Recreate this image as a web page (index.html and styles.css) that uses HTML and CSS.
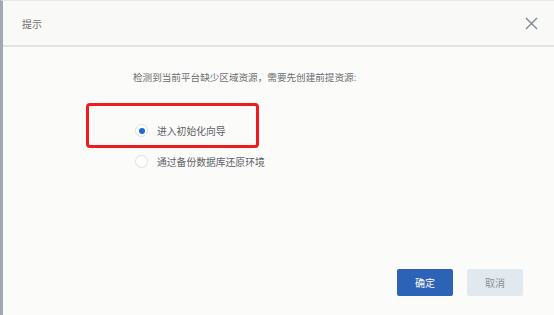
FILE: index.html
```html
<!DOCTYPE html>
<html lang="zh-CN">

<head>
    <meta charset="UTF-8">
    <title>提示</title>
    <link rel="stylesheet" href="styles.css">
</head>

<body>
    <div class="dialog">
        <div class="dialog-header">
            <span class="dialog-title">提示</span>
            <span class="close-btn">
                <svg width="13" height="13" viewBox="0 0 13 13">
                    <path d="M1 1L12 12M12 1L1 12" stroke="#7f8790" stroke-width="1.4" fill="none"/>
                </svg>
            </span>
        </div>

        <div class="dialog-body">
            <p class="message">检测到当前平台缺少区域资源，需要先创建前提资源:</p>
            <div class="options">
                <div class="highlight"></div>
                <label class="option">
                    <span class="radio checked"></span>
                    <span>进入初始化向导</span>
                </label>
                <label class="option">
                    <span class="radio"></span>
                    <span>通过备份数据库还原环境</span>
                </label>
            </div>
        </div>

        <div class="dialog-footer">
            <button class="btn btn-primary">确定</button>
            <button class="btn btn-default">取消</button>
        </div>
    </div>
</body>

</html>
```

FILE: styles.css
```css
* {
    margin: 0;
    padding: 0;
    box-sizing: border-box;
    font-family: "Noto Sans CJK SC", "Noto Sans", sans-serif;
}

body {
    background-color: #fbfbf9;
    width: 554px;
    height: 315px;
    overflow: hidden;
}

.dialog {
    display: flex;
    flex-direction: column;
    height: 315px;
    border-left: 3px solid #a4a9ae;
    border-top: 1px solid #e4e9eb;
    background-color: #fbfbf9;
}

.dialog-header {
    height: 46px;
    display: flex;
    justify-content: space-between;
    align-items: center;
    padding: 0 16px 0 19px;
    border-bottom: 2px solid #e1e3e3;
    background-color: #f9faf7;
}

.dialog-title {
    font-size: 10px;
    color: #6d7175;
}

.close-btn {
    display: flex;
}

.dialog-body {
    padding: 23px 0 0 130px;
}

.message {
    font-size: 9.6px;
    line-height: 14px;
    color: #6a6e72;
}

.options {
    position: relative;
    margin-top: 31px;
    padding-left: 2px;
}

.highlight {
    position: absolute;
    top: -12px;
    left: -47px;
    width: 173px;
    height: 45px;
    border: 3px solid #ee1c1c;
    border-radius: 4px;
}

.option {
    display: flex;
    align-items: center;
    gap: 9px;
    height: 31px;
    font-size: 9.8px;
    color: #5d6166;
}

.radio {
    width: 13px;
    height: 13px;
    border-radius: 50%;
    border: 1px solid #dcdfe2;
    background-color: #fff;
    display: flex;
    align-items: center;
    justify-content: center;
}

.radio.checked::after {
    content: "";
    width: 6px;
    height: 6px;
    border-radius: 50%;
    background-color: #1b6bd6;
}

.dialog-footer {
    margin-top: auto;
    display: flex;
    justify-content: flex-end;
    gap: 14px;
    padding: 0 31px 19px 0;
}

.btn {
    width: 56px;
    height: 27px;
    border: none;
    border-radius: 2px;
    font-size: 10px;
}

.btn-primary {
    background-color: #2d63b6;
    color: #fff;
}

.btn-default {
    background-color: #e2e9ee;
    color: #8c9197;
}
```
